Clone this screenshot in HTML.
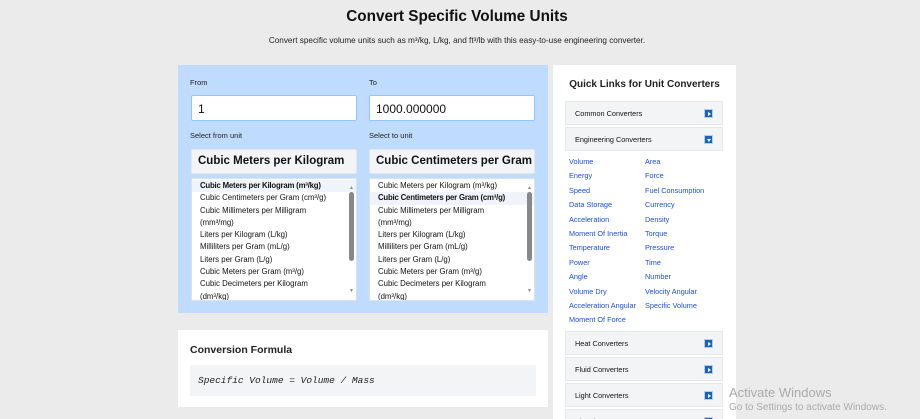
<!DOCTYPE html>
<html><head><meta charset="utf-8"><style>
*{box-sizing:border-box;margin:0;padding:0}
html,body{width:920px;height:419px;overflow:hidden}
body{background:#ebebeb;font-family:"Liberation Sans",sans-serif;color:#111;position:relative}
.a{position:absolute}
h1{position:absolute;left:0;width:914px;top:8px;text-align:center;font-size:15.3px;font-weight:bold}
.sub{position:absolute;left:0;width:914px;top:36px;text-align:center;font-size:8.2px;color:#222}
.panel{left:178px;top:65px;width:370px;height:248px;background:#bfdbfe}
.lbl{font-size:7.5px;color:#222}
.inp{background:#fff;border:1px solid #93c5fd;border-radius:2px;height:26px;width:166px;font-size:12px;padding:6px 6px}
.sel{background:#f3f4f6;border:1px solid #e5e7eb;height:25px;width:166px;font-size:11.5px;font-weight:bold;padding:5px 6px;white-space:nowrap;overflow:hidden;border-radius:2px}
.list{background:#fff;border:1px solid #dbe3ea;width:166px;height:123px;font-size:7.8px;line-height:12.3px;padding:1px 0;overflow:hidden;border-radius:2px}
.list div{padding-left:8px;padding-right:14px;white-space:nowrap}
.list div.w{white-space:normal}
.list .s{background:#eff4fb;font-weight:bold;letter-spacing:-0.2px}
.sb{position:absolute;right:2px;top:13px;width:5px;height:69px;background:#888;border-radius:3px}
.ar{position:absolute;right:2px;font-size:5px;color:#888}
.card{left:178px;top:330px;width:370px;height:77px;background:#fff}
.side{left:553px;top:65px;width:183px;height:354px;background:#fff;overflow:hidden}
.acc{position:absolute;left:12px;width:158px;height:24px;background:#f3f4f6;border:1px solid #e5e7eb;font-size:7.3px;padding:7px 9px}
.ic{position:absolute;right:9px;top:7px;width:9px;height:9px;background:#1565c0;border:1px solid #bcd}
.ic:after{content:"";position:absolute;left:3px;top:2px;border-left:3px solid #fff;border-top:2px solid transparent;border-bottom:2px solid transparent}
.ic.d:after{left:2px;top:3px;border-top:3px solid #fff;border-left:2px solid transparent;border-right:2px solid transparent;border-bottom:0}
.links{position:absolute;left:12px;top:86px;width:158px;height:178px;font-size:7.3px;color:#1d4ed8}
.links span{position:absolute;white-space:nowrap}
</style></head><body>
<h1>Convert Specific Volume Units</h1>
<div class="sub">Convert specific volume units such as m³/kg, L/kg, and ft³/lb with this easy-to-use engineering converter.</div>
<div class="a panel">
<div class="a lbl" style="left:12px;top:13px">From</div>
<div class="a lbl" style="left:191px;top:13px">To</div>
<div class="a inp" style="left:13px;top:30px">1</div>
<div class="a inp" style="left:191px;top:30px">1000.000000</div>
<div class="a lbl" style="left:12px;top:66px">Select from unit</div>
<div class="a lbl" style="left:191px;top:66px">Select to unit</div>
<div class="a sel" style="left:13px;top:84px">Cubic Meters per Kilogram</div>
<div class="a sel" style="left:191px;top:84px">Cubic Centimeters per Gram</div>
<div class="a list" style="left:13px;top:113px">
<div class="s">Cubic Meters per Kilogram (m³/kg)</div><div>Cubic Centimeters per Gram (cm³/g)</div><div>Cubic Millimeters per Milligram</div><div>(mm³/mg)</div><div>Liters per Kilogram (L/kg)</div><div>Milliliters per Gram (mL/g)</div><div>Liters per Gram (L/g)</div><div>Cubic Meters per Gram (m³/g)</div><div>Cubic Decimeters per Kilogram</div><div>(dm³/kg)</div>
<span class="ar" style="top:3px">▲</span><span class="sb"></span><span class="ar" style="bottom:3px">▼</span></div>
<div class="a list" style="left:191px;top:113px">
<div>Cubic Meters per Kilogram (m³/kg)</div><div class="s">Cubic Centimeters per Gram (cm³/g)</div><div>Cubic Millimeters per Milligram</div><div>(mm³/mg)</div><div>Liters per Kilogram (L/kg)</div><div>Milliliters per Gram (mL/g)</div><div>Liters per Gram (L/g)</div><div>Cubic Meters per Gram (m³/g)</div><div>Cubic Decimeters per Kilogram</div><div>(dm³/kg)</div>
<span class="ar" style="top:3px">▲</span><span class="sb"></span><span class="ar" style="bottom:3px">▼</span></div>
</div>
<div class="a card">
<div class="a" style="left:12px;top:14px;font-size:10.5px;font-weight:bold;color:#222">Conversion Formula</div>
<div class="a" style="left:12px;top:35px;width:346px;height:31px;background:#f3f4f6;font-family:'Liberation Mono',monospace;font-style:italic;font-size:9.5px;padding:10px 8px;color:#222">Specific Volume = Volume / Mass</div>
</div>
<div class="a side">
<div class="a" style="left:0;width:183px;top:14px;text-align:center;font-size:10px;font-weight:bold;color:#222">Quick Links for Unit Converters</div>
<div class="acc" style="top:36px">Common Converters<span class="ic"></span></div>
<div class="acc" style="top:62px">Engineering Converters<span class="ic d"></span></div>
<div class="links">
<span style="left:4px;top:6px">Volume</span><span style="left:80px;top:6px">Area</span>
<span style="left:4px;top:20.4px">Energy</span><span style="left:80px;top:20.4px">Force</span>
<span style="left:4px;top:34.8px">Speed</span><span style="left:80px;top:34.8px">Fuel Consumption</span>
<span style="left:4px;top:49.2px">Data Storage</span><span style="left:80px;top:49.2px">Currency</span>
<span style="left:4px;top:63.6px">Acceleration</span><span style="left:80px;top:63.6px">Density</span>
<span style="left:4px;top:78px">Moment Of Inertia</span><span style="left:80px;top:78px">Torque</span>
<span style="left:4px;top:92.4px">Temperature</span><span style="left:80px;top:92.4px">Pressure</span>
<span style="left:4px;top:106.8px">Power</span><span style="left:80px;top:106.8px">Time</span>
<span style="left:4px;top:121.2px">Angle</span><span style="left:80px;top:121.2px">Number</span>
<span style="left:4px;top:135.6px">Volume Dry</span><span style="left:80px;top:135.6px">Velocity Angular</span>
<span style="left:4px;top:150px">Acceleration Angular</span><span style="left:80px;top:150px">Specific Volume</span>
<span style="left:4px;top:164.4px">Moment Of Force</span>
</div>
<div class="acc" style="top:266px">Heat Converters<span class="ic"></span></div>
<div class="acc" style="top:292px">Fluid Converters<span class="ic"></span></div>
<div class="acc" style="top:318px">Light Converters<span class="ic"></span></div>
<div class="acc" style="top:344px">Electric Converters<span class="ic"></span></div>
</div>
<div class="a" style="left:729px;top:385px;font-size:13px;color:#aaa">Activate Windows</div>
<div class="a" style="left:729px;top:402px;font-size:10px;color:#aaa">Go to Settings to activate Windows.</div>
</body></html>
